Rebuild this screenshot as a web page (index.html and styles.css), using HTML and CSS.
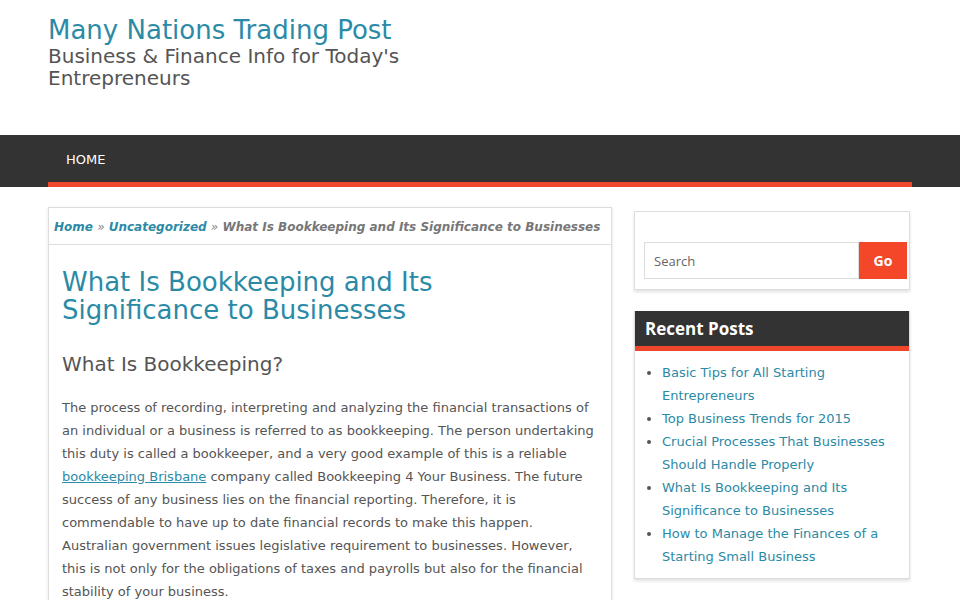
FILE: index.html
```html
<!DOCTYPE html>
<html>
<head>
<meta charset="utf-8">
<link rel="stylesheet" href="styles.css">
</head>
<body>
<header class="site-header">
  <div class="site-title">Many Nations Trading Post</div>
  <div class="site-desc">Business &amp; Finance Info for Today's<br>Entrepreneurs</div>
</header>
<nav class="nav">
  <div class="nav-inner"><a class="nav-link" href="#">HOME</a></div>
</nav>
<div class="content">
  <main class="main">
    <div class="breadcrumb"><a href="#">Home</a> <span class="sep">»</span> <a href="#">Uncategorized</a> <span class="sep">»</span> <span class="current">What Is Bookkeeping and Its Significance to Businesses</span></div>
    <article class="post">
      <h1 class="post-title">What Is Bookkeeping and Its<br>Significance to Businesses</h1>
      <h2 class="post-h2">What Is Bookkeeping?</h2>
      <p class="post-p">The process of recording, interpreting and analyzing the financial transactions of an individual or a business is referred to as bookkeeping. The person undertaking this duty is called a bookkeeper, and a very good example of this is a reliable <a href="#">bookkeeping Brisbane</a> company called Bookkeeping 4 Your Business. The future success of any business lies on the financial reporting. Therefore, it is commendable to have up to date financial records to make this happen. Australian government issues legislative requirement to businesses. However, this is not only for the obligations of taxes and payrolls but also for the financial stability of your business.</p>
    </article>
  </main>
  <aside class="sidebar">
    <div class="widget search-widget">
      <form class="search-form">
        <input class="search-input" type="text" placeholder="Search">
        <button class="search-btn" type="button">Go</button>
      </form>
    </div>
    <div class="widget recent">
      <h3 class="widget-title">Recent Posts</h3>
      <ul class="recent-list">
        <li><a href="#">Basic Tips for All Starting Entrepreneurs</a></li>
        <li><a href="#">Top Business Trends for 2015</a></li>
        <li><a href="#">Crucial Processes That Businesses Should Handle Properly</a></li>
        <li><a href="#">What Is Bookkeeping and Its Significance to Businesses</a></li>
        <li><a href="#">How to Manage the Finances of a Starting Small Business</a></li>
      </ul>
    </div>
    <div class="widget empty"></div>
  </aside>
</div>
</body>
</html>
```

FILE: styles.css
```css
html, body {
  margin: 0;
  padding: 0;
  background: #fff;
  font-family: "DejaVu Sans", sans-serif;
  color: #555;
}
a { color: #2b8aa6; text-decoration: none; }

.site-header {
  height: 135px;
  box-sizing: border-box;
  padding: 15px 48px 0;
}
.site-title {
  font-size: 26px;
  line-height: 30px;
  color: #2b8aa6;
}
.site-desc {
  font-size: 20px;
  line-height: 22px;
  color: #555;
}

.nav {
  background: #333;
  height: 52px;
}
.nav-inner {
  margin: 0 48px;
  height: 47px;
  border-bottom: 5px solid #f0472c;
  display: flex;
  align-items: center;
}
.nav-link {
  color: #fff;
  font-size: 13px;
  padding-left: 18px;
  padding-top: 2px;
}

.content {
  margin: 0 48px;
  display: flex;
  gap: 22px;
  align-items: flex-start;
}
.main {
  width: 564px;
  box-sizing: border-box;
  margin-top: 20px;
  border: 1px solid #ddd;
  box-shadow: 0 1px 3px rgba(0,0,0,0.12);
}
.breadcrumb {
  padding: 11px 5px 8px;
  font-size: 12px;
  line-height: 17px;
  font-weight: bold;
  font-style: italic;
  border-bottom: 1px solid #ddd;
  color: #777;
  white-space: nowrap;
}
.breadcrumb .sep { font-weight: normal; color: #888; }
.post {
  padding: 23px 13px 0;
}
.post-title {
  margin: 0;
  font-weight: normal;
  font-size: 26px;
  line-height: 28px;
  color: #2b8aa6;
}
.post-h2 {
  margin: 25px 0 0;
  font-weight: normal;
  font-size: 20px;
  line-height: 30px;
  color: #555;
}
.post-p {
  margin: 17px 0 0;
  font-size: 13px;
  line-height: 23px;
  color: #555;
}
.post-p a { text-decoration: underline; }

.sidebar {
  width: 276px;
  margin-top: 24px;
  display: flex;
  flex-direction: column;
  gap: 21px;
}
.widget {
  border: 1px solid #ddd;
  box-shadow: 0 2px 3px rgba(0,0,0,0.12);
  background: #fff;
}
.search-widget {
  padding: 30px 2px 10px 9px;
}
.search-form {
  display: flex;
}
.search-input {
  width: 215px;
  height: 37px;
  box-sizing: border-box;
  border: 1px solid #ddd;
  padding: 0 9px;
  font-family: "Open Sans", sans-serif;
  font-size: 13px;
  color: #555;
  outline: none;
}
.search-input::placeholder { color: #666; }
.search-btn {
  width: 48px;
  height: 37px;
  border: 0;
  background: #f4472a;
  color: #fff;
  font-family: "Open Sans", sans-serif;
  font-weight: bold;
  font-size: 14px;
  padding: 0;
}
.recent { border-top: 0; }
.widget-title {
  margin: 0;
  background: #333;
  color: #fff;
  font-family: "Open Sans", sans-serif;
  font-weight: bold;
  font-size: 17px;
  line-height: 35px;
  padding: 0 10px;
  border-bottom: 5px solid #f0472c;
}
.recent-list {
  margin: 0;
  padding: 10px 10px 10px 27px;
  font-size: 13px;
  line-height: 23px;
  color: #555;
}
.empty { height: 20px; }
```
